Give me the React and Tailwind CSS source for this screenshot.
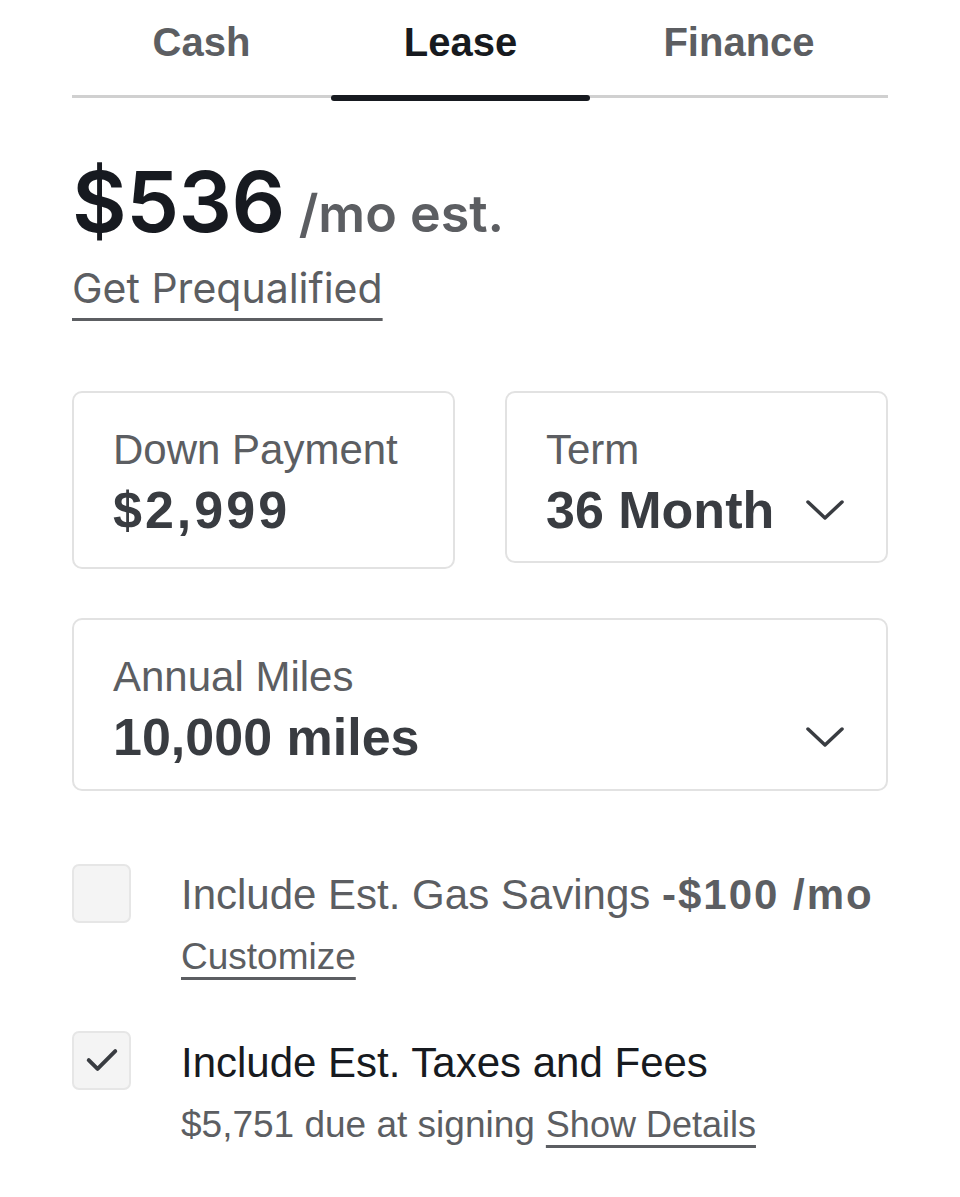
import React from 'react'

function Chevron() {
  return (
    <svg width="38" height="22" viewBox="0 0 38 22" fill="none" className="shrink-0">
      <polyline points="2,3 19,19 36,3" stroke="#393c41" strokeWidth="3.5" strokeLinecap="round" strokeLinejoin="round" />
    </svg>
  )
}

function Field({ label, value, dropdown, height, valueClass = '' }) {
  return (
    <div className={`border-2 border-[#e2e2e2] rounded-[10px] bg-white pl-[39px] pr-[42px] pt-[32px] ${height}`}>
      <div className="text-[42px] leading-[49px] text-[#5c5e62]">{label}</div>
      <div className="mt-[5px] flex items-center justify-between">
        <span className={`text-[52px] leading-[62px] font-bold text-[#393c41] ${valueClass}`}>{value}</span>
        {dropdown && <Chevron />}
      </div>
    </div>
  )
}

function Checkbox({ checked }) {
  return (
    <div className="w-[59px] h-[59px] shrink-0 rounded-[7px] border-2 border-[#e6e6e6] bg-[#f4f4f4] flex items-center justify-center">
      {checked && (
        <svg width="56" height="56" viewBox="0 0 56 56" fill="none">
          <polyline points="15,27 24,36 42,18" stroke="#393c41" strokeWidth="4" strokeLinecap="round" strokeLinejoin="round" />
        </svg>
      )}
    </div>
  )
}

export default function App() {
  const tabs = [
    { name: 'Cash', width: 'w-[259px]' },
    { name: 'Lease', width: 'w-[259px]', active: true },
    { name: 'Finance', width: 'flex-1' },
  ]

  return (
    <div className="min-h-[1197px] bg-white px-[72px] font-['Liberation_Sans',Arial,sans-serif]">
      {/* Tabs */}
      <div className="flex border-b-[3px] border-[#d0d0d0]">
        {tabs.map((tab) => (
          <div key={tab.name} className={`relative h-[95px] pt-[18px] text-center ${tab.width}`}>
            <span className={`text-[40px] leading-[48px] font-bold ${tab.active ? 'text-[#171a20]' : 'text-[#5c5e62]'}`}>
              {tab.name}
            </span>
            {tab.active && <div className="absolute left-0 right-0 -bottom-[6px] h-[6px] rounded-full bg-[#171a20]" />}
          </div>
        ))}
      </div>

      {/* Price */}
      <div className="mt-[62px] flex items-baseline font-['Inter',sans-serif]">
        <span className="text-[84px] leading-[84px] font-semibold text-[#171a20] tracking-[-0.5px]">$536</span>
        <span className="ml-[14px] text-[52px] font-semibold text-[#5c5e62]">/mo est.</span>
      </div>
      <div className="mt-[11px]">
        <span className="font-['Inter',sans-serif] text-[41px] leading-[49px] text-[#5c5e62] underline decoration-[3px] underline-offset-[15px] decoration-[#5c5e62]">
          Get Prequalified
        </span>
      </div>

      {/* Fields */}
      <div className="mt-[78px] grid grid-cols-2 gap-[50px] items-start">
        <Field label="Down Payment" value="$2,999" height="h-[178px]" valueClass="tracking-[3px]" />
        <Field label="Term" value="36 Month" dropdown height="h-[172px]" />
      </div>
      <div className="mt-[49px]">
        <Field label="Annual Miles" value="10,000 miles" dropdown height="h-[173px]" />
      </div>

      {/* Options */}
      <div className="mt-[73px] flex gap-[50px]">
        <Checkbox />
        <div className="pt-[6px]">
          <div className="text-[42px] leading-[50px] text-[#5c5e62]">
            Include Est. Gas Savings <span className="font-bold tracking-[2px]">-$100 /mo</span>
          </div>
          <div className="mt-[15px]">
            <span className="text-[37px] leading-[44px] text-[#5c5e62] underline decoration-[3px] underline-offset-[8px] decoration-[#5c5e62]">
              Customize
            </span>
          </div>
        </div>
      </div>

      <div className="mt-[52px] flex gap-[50px]">
        <Checkbox checked />
        <div className="pt-[7px]">
          <div className="text-[42px] leading-[50px] text-[#171a20]">Include Est. Taxes and Fees</div>
          <div className="mt-[15px] flex items-baseline gap-[11px] text-[37px] leading-[44px] text-[#5c5e62]">
            <span>$5,751 due at signing</span>
            <span className="text-[36px] underline decoration-[3px] underline-offset-[8px] decoration-[#5c5e62]">Show Details</span>
          </div>
        </div>
      </div>
    </div>
  )
}
